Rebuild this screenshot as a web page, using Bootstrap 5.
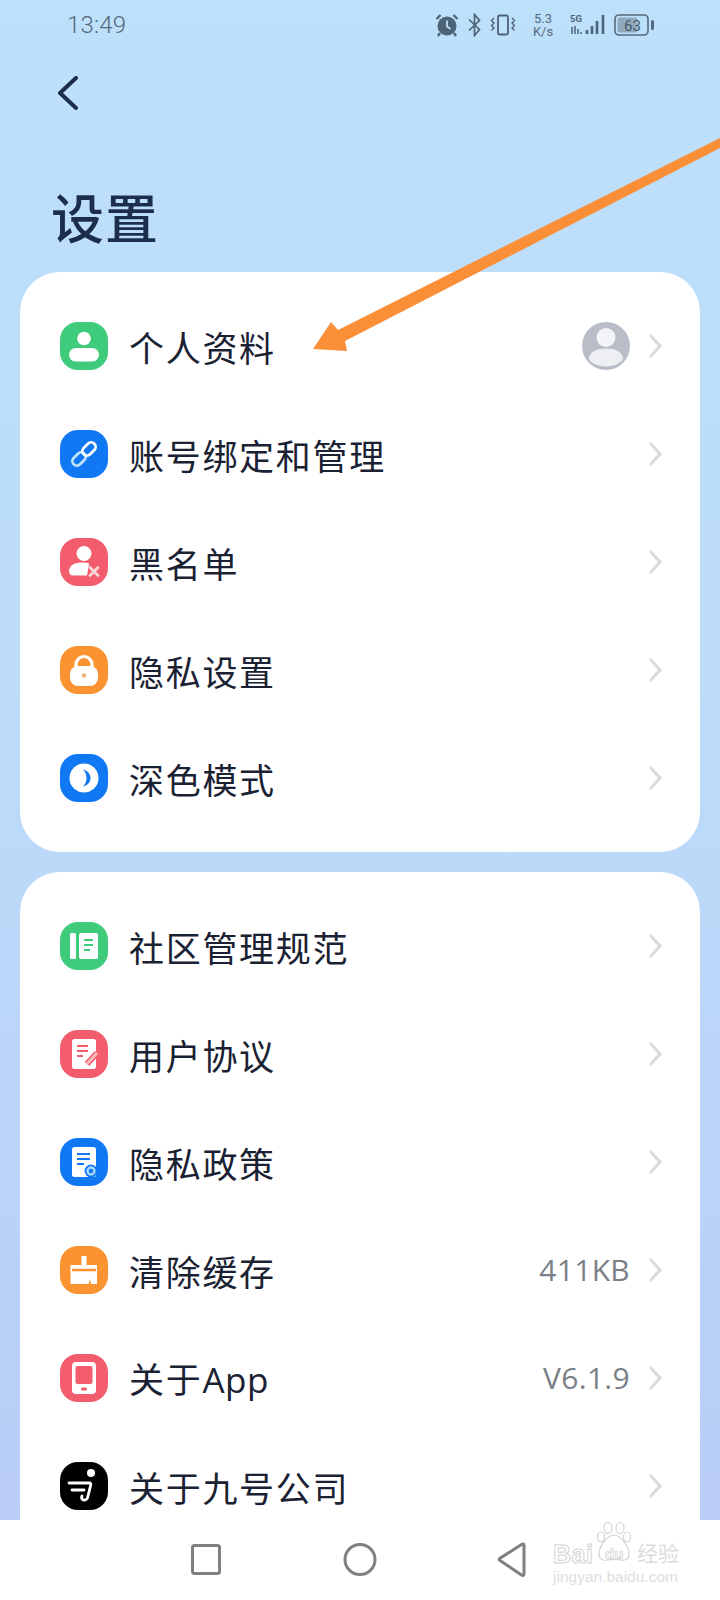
<!DOCTYPE html>
<html lang="zh-CN">
<head>
    <meta charset="UTF-8">
    <meta name="viewport" content="width=device-width, initial-scale=1.0">
    <title>设置</title>
    <link href="https://cdn.jsdelivr.net/npm/bootstrap@5.3.0/dist/css/bootstrap.min.css" rel="stylesheet">
    <style>
        html, body { margin: 0; height: 1600px; overflow: hidden; }
        body { font-family: "Noto Sans CJK SC", "Noto Sans", sans-serif; color: #1d2a44; background: #fff; }
        .screen { width: 720px; height: 1600px; position: relative; overflow: hidden; }
        .scroll-area { height: 1520px; overflow: hidden; background: linear-gradient(180deg, #bde0fb 0%, #bcdcfa 45%, #b9cdf6 100%); }

        .status-line { height: 50px; padding: 0 65px 0 67px; color: #566a7c; }
        .clock { font-family: Roboto, sans-serif; font-weight: 300; font-size: 24px; letter-spacing: .2px; }
        .speed { font-family: Roboto, sans-serif; font-size: 13px; line-height: 13px; text-align: center; width: 22px; }
        .status-icons svg { display: block; }

        .back-row { height: 58px; padding-left: 57px; padding-top: 26px; }
        .page-title { font-size: 53px; font-weight: 500; letter-spacing: 1px; line-height: 64px; margin: 76px 0 0 51px; height: 88px; color: #1d2d4c; }

        .panel { margin: 0 20px 20px; border: 0; border-radius: 40px; padding: 20px 0; background: #fff; }
        .panel .list-group-item { height: 108px; padding: 0 38px 0 40px; border: 0; background: transparent; }
        .row-text { font-size: 35px; letter-spacing: 1.7px; color: #1a2132; line-height: 1; margin-left: 21px; white-space: nowrap; }
        .row-text .latin { font-family: "Open Sans", sans-serif; letter-spacing: .5px; }
        .row-value { font-family: "Open Sans", sans-serif; font-size: 30px; letter-spacing: .3px; color: #7b7f86; margin-right: 18px; line-height: 1; }
        .app-icon { width: 48px; height: 48px; border-radius: 18px; flex: none; display: block; }
        .bg-g { background: #3ecb7c; }
        .bg-b { background: #0f78f2; }
        .bg-r { background: #f25c6c; }
        .bg-o { background: #fb9430; }
        .bg-k { background: #000; }
        .avatar { width: 48px; height: 48px; margin-right: 18px; display: block; }
        .chev { width: 14px; height: 26px; display: block; flex: none; }

        .nav-bar { height: 80px; background: #fff; }
        .arrow-mark { position: absolute; left: 0; top: 0; width: 720px; height: 400px; pointer-events: none; }
        .watermark { position: absolute; left: 552px; top: 1522px; width: 128px; height: 68px; font-family: "Liberation Sans", sans-serif; }
        .wm-paw { position: absolute; left: 42px; top: 0; }
        .wm-main { position: absolute; left: 1px; top: 20px; font-size: 25px; font-weight: 700; line-height: 1; color: transparent; -webkit-text-stroke: 1px #d4d4d4; letter-spacing: .5px; white-space: nowrap; }
        .wm-du { position: absolute; left: 53px; top: 24px; font-size: 15px; font-weight: 700; line-height: 1; color: transparent; -webkit-text-stroke: .7px #d0d0d0; }
        .wm-cn { position: absolute; left: 85px; top: 20px; font-family: "Noto Sans CJK SC", sans-serif; font-size: 21px; line-height: 1; color: #dcdcdc; white-space: nowrap; }
        .wm-url { position: absolute; left: 1px; top: 47px; font-size: 15.5px; line-height: 1; color: #dedede; white-space: nowrap; }
    </style>
</head>
<body>
<div class="screen">
    <div class="scroll-area">
        <!-- status bar -->
        <div class="status-line d-flex align-items-center justify-content-between">
            <span class="clock">13:49</span>
            <div class="status-icons d-flex align-items-center">
                <svg width="24" height="24" viewBox="0 0 24 24" class="me-2">
                    <circle cx="12" cy="13" r="9.500" fill="#4d6376"/>
                    <path d="M12 7.500v6l3.500 2.500" fill="none" stroke="#bde0fb" stroke-width="1.800"/>
                    <path d="M1.500 6 5.500 2M22.500 6l-4-4M5 20l-2 3M19 20l2 3" stroke="#4d6376" stroke-width="2.400" fill="none"/>
                </svg>
                <svg width="15" height="24" viewBox="0 0 15 24" class="me-2">
                    <path d="M2 6.500 12.500 16.500 7.500 22.500V1.500L12.500 7.500 2 17.500" fill="none" stroke="#4d6376" stroke-width="1.700"/>
                </svg>
                <svg width="26" height="24" viewBox="0 0 26 24" class="me-3">
                    <rect x="8" y="2.500" width="10" height="19" rx="1.500" fill="none" stroke="#4d6376" stroke-width="1.800"/>
                    <path d="M4 5 1.500 7.500 4 10 1.500 12.500 4 15 1.500 17.500M22 5l2.500 2.500L22 10l2.500 2.500L22 15l2.500 2.500" fill="none" stroke="#4d6376" stroke-width="1.400"/>
                </svg>
                <div class="speed me-3">5.3<br>K/s</div>
                <svg width="36" height="24" viewBox="0 0 36 24" class="me-2">
                    <text x="0" y="9" font-family="Roboto, sans-serif" font-weight="700" font-size="9.500" fill="#4d6376">5G</text>
                    <path d="M2 14v7M5 13v8M8 16v5M11 19v2" stroke="#4d6376" stroke-width="1.500"/>
                    <path d="M17 17v4M22 13v8M27 8v13M33 2v19" stroke="#4d6376" stroke-width="2.600"/>
                </svg>
                <svg width="41" height="24" viewBox="0 0 41 24">
                    <rect x="1" y="2" width="33" height="20" rx="4" fill="none" stroke="#566a7c" stroke-width="1.600"/>
                    <rect x="3.500" y="4.500" width="20" height="15" rx="2" fill="#90a9bd"/>
                    <text x="10" y="17.500" font-family="Roboto, sans-serif" font-size="15" fill="#445a6c">63</text>
                    <rect x="37" y="7" width="3" height="10" rx="1.500" fill="#566a7c"/>
                </svg>
            </div>
        </div>

        <!-- back + title -->
        <div class="back-row">
            <svg width="22" height="34" viewBox="0 0 22 34" class="d-block">
                <path d="M19 2 3 17 19 32" fill="none" stroke="#1d2d4c" stroke-width="4" stroke-linecap="round" stroke-linejoin="round"/>
            </svg>
        </div>
        <div class="page-title">设置</div>

        <!-- account section -->
        <div class="card panel">
            <ul class="list-group list-group-flush">
                <li class="list-group-item d-flex align-items-center">
                    <svg class="app-icon bg-g" viewBox="0 0 48 48">
                        <circle cx="24" cy="16.500" r="6.800" fill="#fff"/>
                        <rect x="9" y="26" width="30" height="13.500" rx="6.700" fill="#fff"/>
                    </svg>
                    <span class="row-text">个人资料</span>
                    <svg class="avatar ms-auto" viewBox="0 0 48 48">
                        <circle cx="24" cy="24" r="24" fill="#b9bdc8"/>
                        <circle cx="24" cy="15.500" r="9.500" fill="#f3f4f8"/>
                        <path d="M7 37c0-7.500 8-10.500 17-10.500S41 29.500 41 37c0 2-7 7.500-17 7.500S7 39 7 37Z" fill="#eeeff2"/>
                    </svg>
                    <svg class="chev" viewBox="0 0 14 26"><path d="M2 2 12 13 2 24" fill="none" stroke="#dcdcdc" stroke-width="3.200"/></svg>
                </li>
                <li class="list-group-item d-flex align-items-center">
                    <svg class="app-icon bg-b" viewBox="0 0 48 48">
                        <rect x="11.500" y="24.500" width="15" height="9" rx="4.500" transform="rotate(-45 19 29)" fill="none" stroke="#bfe3ff" stroke-width="2.800"/>
                        <rect x="21.500" y="14.500" width="15" height="9" rx="4.500" transform="rotate(-45 29 19)" fill="none" stroke="#fff" stroke-width="2.800"/>
                    </svg>
                    <span class="row-text">账号绑定和管理</span>
                    <svg class="chev ms-auto" viewBox="0 0 14 26"><path d="M2 2 12 13 2 24" fill="none" stroke="#dcdcdc" stroke-width="3.200"/></svg>
                </li>
                <li class="list-group-item d-flex align-items-center">
                    <svg class="app-icon bg-r" viewBox="0 0 48 48">
                        <circle cx="24" cy="15.500" r="7.500" fill="#fff"/>
                        <path d="M9 33c0-6 6-8.500 13.500-8.500 2.500 0 4.800.3 6.700 1L27 37.500H13c-2.500 0-4-2-4-4.500Z" fill="#fff"/>
                        <path d="M30 29.500l8 8M38 29.500l-8 8" stroke="#fbd6d9" stroke-width="2.800" stroke-linecap="round"/>
                    </svg>
                    <span class="row-text">黑名单</span>
                    <svg class="chev ms-auto" viewBox="0 0 14 26"><path d="M2 2 12 13 2 24" fill="none" stroke="#dcdcdc" stroke-width="3.200"/></svg>
                </li>
                <li class="list-group-item d-flex align-items-center">
                    <svg class="app-icon bg-o" viewBox="0 0 48 48">
                        <path d="M16 22v-3.500a8 8 0 0 1 16 0V22" fill="none" stroke="#fff" stroke-width="3.200"/>
                        <rect x="10" y="20" width="28" height="20" rx="8" fill="#fff"/>
                        <circle cx="24" cy="29.500" r="2.300" fill="#e8b67c"/>
                    </svg>
                    <span class="row-text">隐私设置</span>
                    <svg class="chev ms-auto" viewBox="0 0 14 26"><path d="M2 2 12 13 2 24" fill="none" stroke="#dcdcdc" stroke-width="3.200"/></svg>
                </li>
                <li class="list-group-item d-flex align-items-center">
                    <svg class="app-icon bg-b" viewBox="0 0 48 48">
                        <circle cx="24" cy="24" r="14.500" fill="#fff"/>
                        <path d="M23 15.500c4.500 1 7.500 4.500 7.500 8.500s-3 7.500-7.500 8.500c2.500-2.500 3.500-5.500 3.500-8.500s-1-6-3.500-8.500Z" fill="#0f78f2"/>
                    </svg>
                    <span class="row-text">深色模式</span>
                    <svg class="chev ms-auto" viewBox="0 0 14 26"><path d="M2 2 12 13 2 24" fill="none" stroke="#dcdcdc" stroke-width="3.200"/></svg>
                </li>
            </ul>
        </div>

        <!-- about section, runs under the nav bar -->
        <div class="card panel">
            <ul class="list-group list-group-flush">
                <li class="list-group-item d-flex align-items-center">
                    <svg class="app-icon bg-g" viewBox="0 0 48 48">
                        <rect x="10" y="11" width="6" height="26" rx="1.500" fill="#fff"/>
                        <rect x="19" y="11" width="19" height="26" rx="2" fill="#fff"/>
                        <path d="M24 18h9M24 23h9M24 28h6" stroke="#3ecb7c" stroke-width="2"/>
                    </svg>
                    <span class="row-text">社区管理规范</span>
                    <svg class="chev ms-auto" viewBox="0 0 14 26"><path d="M2 2 12 13 2 24" fill="none" stroke="#dcdcdc" stroke-width="3.200"/></svg>
                </li>
                <li class="list-group-item d-flex align-items-center">
                    <svg class="app-icon bg-r" viewBox="0 0 48 48">
                        <rect x="12" y="9" width="24" height="30" rx="2.500" fill="#fff"/>
                        <path d="M17 16h11M17 21h11M17 26h6" stroke="#f25c6c" stroke-width="2"/>
                        <path d="M27 34l10-11" stroke="#f25c6c" stroke-width="6"/>
                        <path d="M27 34l10-11" stroke="#f9b9bf" stroke-width="3"/>
                    </svg>
                    <span class="row-text">用户协议</span>
                    <svg class="chev ms-auto" viewBox="0 0 14 26"><path d="M2 2 12 13 2 24" fill="none" stroke="#dcdcdc" stroke-width="3.200"/></svg>
                </li>
                <li class="list-group-item d-flex align-items-center">
                    <svg class="app-icon bg-b" viewBox="0 0 48 48">
                        <rect x="12" y="9" width="24" height="30" rx="2.500" fill="#fff"/>
                        <path d="M17 16h13M17 21h13M17 26h7" stroke="#0f78f2" stroke-width="2"/>
                        <circle cx="31" cy="33" r="6.500" fill="#0f78f2"/>
                        <circle cx="31" cy="33" r="3.500" fill="none" stroke="#a8d6ff" stroke-width="2.400"/>
                    </svg>
                    <span class="row-text">隐私政策</span>
                    <svg class="chev ms-auto" viewBox="0 0 14 26"><path d="M2 2 12 13 2 24" fill="none" stroke="#dcdcdc" stroke-width="3.200"/></svg>
                </li>
                <li class="list-group-item d-flex align-items-center">
                    <svg class="app-icon bg-o" viewBox="0 0 48 48">
                        <path d="M21.500 10h5v9H37v19h-6l-1-5-1.500 5h-18V19h11Z" fill="#fff"/>
                        <path d="M12 24h24" stroke="#fb9430" stroke-width="2.400"/>
                    </svg>
                    <span class="row-text">清除缓存</span>
                    <span class="row-value ms-auto">411KB</span>
                    <svg class="chev" viewBox="0 0 14 26"><path d="M2 2 12 13 2 24" fill="none" stroke="#dcdcdc" stroke-width="3.200"/></svg>
                </li>
                <li class="list-group-item d-flex align-items-center">
                    <svg class="app-icon bg-r" viewBox="0 0 48 48">
                        <rect x="12" y="8" width="24" height="32" rx="4" fill="#fff"/>
                        <rect x="15.500" y="12" width="17" height="18" rx="2" fill="#f25c6c"/>
                        <rect x="21" y="33.500" width="6" height="3" rx="1.500" fill="#f25c6c"/>
                    </svg>
                    <span class="row-text">关于<span class="latin">App</span></span>
                    <span class="row-value ms-auto">V6.1.9</span>
                    <svg class="chev" viewBox="0 0 14 26"><path d="M2 2 12 13 2 24" fill="none" stroke="#dcdcdc" stroke-width="3.200"/></svg>
                </li>
                <li class="list-group-item d-flex align-items-center">
                    <svg class="app-icon bg-k" viewBox="0 0 48 48">
                        <circle cx="31" cy="11" r="4" fill="#fff"/>
                        <path d="M9 21h20.500c1 0 1.500.7 1.300 1.700L27.500 36c-.5 2-3.500 2.500-5 1.500-1-.8-1-2.300-.5-3.500" fill="none" stroke="#fff" stroke-width="2.800" stroke-linecap="round"/>
                        <path d="M12 28h12" stroke="#fff" stroke-width="2.800" stroke-linecap="round"/>
                    </svg>
                    <span class="row-text">关于九号公司</span>
                    <svg class="chev ms-auto" viewBox="0 0 14 26"><path d="M2 2 12 13 2 24" fill="none" stroke="#dcdcdc" stroke-width="3.200"/></svg>
                </li>
            </ul>
        </div>
    </div>

    <!-- android nav bar -->
    <div class="nav-bar d-flex">
        <svg width="720" height="80" viewBox="0 0 720 80" class="d-block">
            <rect x="192.500" y="25.500" width="27" height="28" rx="2" fill="none" stroke="#808080" stroke-width="3"/>
            <circle cx="360" cy="39.500" r="15" fill="none" stroke="#808080" stroke-width="3"/>
            <path d="M524 25V54c0 1.500-1 2-2.500 1L500 40.500c-1-.7-1-1.500 0-2.200L521.500 24.500c1.500-1 2.500-.5 2.500.5Z" fill="none" stroke="#808080" stroke-width="3"/>
        </svg>
    </div>

    <!-- annotation arrow on top of the screenshot -->
    <svg class="arrow-mark" viewBox="0 0 720 400">
        <path d="M720 138V148L345 341 347 351 313 349 331 322 338 330Z" fill="#fb8f38"/>
    </svg>

    <!-- watermark -->
    <div class="watermark">
        <svg class="wm-paw" width="40" height="42" viewBox="0 0 40 42">
            <g fill="#fff" stroke="#d4d4d4" stroke-width="1.200">
                <ellipse cx="7" cy="15" rx="3.500" ry="5"/>
                <ellipse cx="14" cy="6" rx="4" ry="5.500"/>
                <ellipse cx="26" cy="6" rx="4" ry="5.500"/>
                <ellipse cx="33" cy="15" rx="3.500" ry="5"/>
                <path d="M20 13c-7 0-15 12-15 19 0 5 4 7 8 6 5-1 9-1 14 0 4 1 8-1 8-6 0-7-8-19-15-19Z"/>
            </g>
        </svg>
        <span class="wm-main">Bai</span>
        <span class="wm-du">du</span>
        <span class="wm-cn">经验</span>
        <span class="wm-url">jingyan.baidu.com</span>
    </div>
</div>
<script src="https://cdn.jsdelivr.net/npm/bootstrap@5.3.0/dist/js/bootstrap.bundle.min.js"></script>
</body>
</html>
